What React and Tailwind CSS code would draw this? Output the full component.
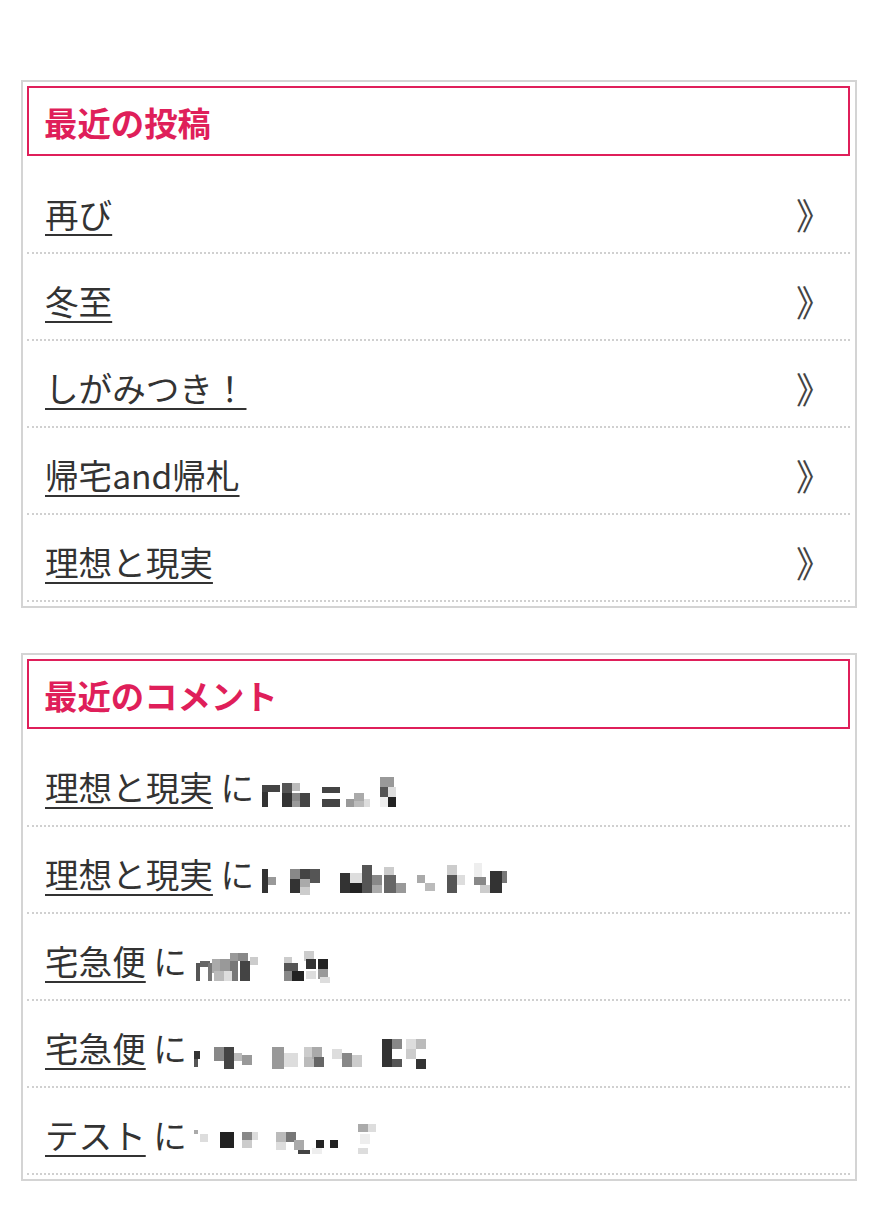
import React from "react";

const FONT = { fontFamily: '"Noto Sans CJK JP", "Noto Sans", sans-serif' };

function Mosaic({ w, h, rects }) {
  return (
    <svg width={w} height={h} viewBox={`0 0 ${w} ${h}`} className="inline-block align-middle">
      {rects.map((r, i) => (
        <rect key={i} x={r[0]} y={r[1]} width={r[2]} height={r[3]} fill={r[4]} />
      ))}
    </svg>
  );
}

const blobs = [
  {
    w: 145, h: 34,
    rects: [
      [0, 10, 6, 22, "#333"], [0, 10, 18, 7, "#444"], [20, 8, 10, 10, "#555"], [20, 18, 10, 14, "#333"],
      [30, 8, 8, 8, "#bbb"], [30, 18, 10, 8, "#888"], [38, 18, 10, 14, "#444"], [30, 26, 8, 6, "#999"],
      [60, 12, 18, 6, "#444"], [60, 24, 18, 8, "#444"],
      [84, 24, 8, 8, "#999"], [92, 18, 10, 8, "#aaa"], [92, 26, 10, 6, "#bbb"], [102, 24, 6, 8, "#ddd"],
      [118, 2, 14, 10, "#999"], [118, 12, 8, 10, "#555"], [126, 12, 8, 10, "#ddd"], [118, 22, 14, 10, "#eee"], [126, 22, 8, 10, "#222"],
    ],
  },
  {
    w: 245, h: 36,
    rects: [
      [0, 8, 6, 24, "#333"], [6, 16, 8, 8, "#999"],
      [28, 8, 10, 10, "#888"], [38, 8, 10, 10, "#444"], [28, 18, 10, 14, "#333"], [38, 18, 10, 8, "#aaa"], [48, 8, 10, 14, "#555"], [38, 26, 10, 8, "#ccc"],
      [78, 12, 10, 20, "#333"], [88, 12, 12, 10, "#ddd"], [88, 22, 12, 10, "#222"], [100, 4, 10, 28, "#555"], [110, 14, 10, 10, "#888"], [110, 24, 10, 8, "#aaa"],
      [122, 6, 10, 8, "#ccc"], [122, 14, 12, 18, "#666"], [134, 22, 10, 10, "#999"],
      [155, 14, 8, 8, "#aaa"], [163, 22, 10, 8, "#bbb"],
      [185, 4, 10, 10, "#ccc"], [185, 14, 10, 18, "#555"], [195, 14, 8, 10, "#ddd"],
      [212, 2, 8, 14, "#eee"], [212, 16, 12, 8, "#888"], [218, 24, 10, 8, "#ccc"], [228, 10, 12, 22, "#333"], [240, 10, 5, 12, "#777"],
    ],
  },
  {
    w: 140, h: 34,
    rects: [
      [2, 14, 4, 18, "#555"], [6, 12, 10, 6, "#666"], [14, 14, 4, 18, "#777"],
      [18, 10, 12, 14, "#aaa"], [26, 10, 10, 14, "#999"], [36, 4, 10, 8, "#999"], [36, 12, 8, 20, "#777"],
      [44, 4, 10, 8, "#888"], [46, 12, 10, 20, "#444"], [56, 8, 8, 8, "#ccc"], [20, 22, 10, 10, "#bbb"], [30, 22, 8, 10, "#ddd"],
      [90, 8, 8, 6, "#ccc"], [90, 14, 14, 8, "#555"], [90, 22, 8, 10, "#888"], [98, 22, 12, 10, "#222"],
      [110, 2, 10, 10, "#ccc"], [112, 10, 10, 10, "#333"], [124, 10, 10, 10, "#222"], [124, 20, 10, 10, "#999"], [112, 22, 10, 8, "#ddd"], [126, 28, 10, 6, "#ddd"],
    ],
  },
  {
    w: 245, h: 36,
    rects: [
      [0, 16, 6, 8, "#333"], [0, 24, 4, 8, "#555"],
      [20, 12, 10, 14, "#888"], [30, 12, 10, 22, "#444"], [40, 18, 8, 8, "#bbb"], [48, 20, 10, 10, "#999"],
      [78, 12, 12, 22, "#999"], [90, 18, 14, 14, "#ddd"],
      [110, 12, 8, 10, "#ccc"], [110, 22, 10, 10, "#bbb"], [118, 12, 10, 12, "#aaa"], [120, 22, 10, 10, "#666"],
      [138, 14, 10, 10, "#ddd"], [148, 18, 10, 14, "#888"], [158, 20, 10, 12, "#ccc"],
      [188, 4, 10, 28, "#333"], [198, 4, 10, 10, "#888"], [198, 24, 10, 8, "#555"],
      [212, 4, 10, 10, "#ddd"], [222, 4, 10, 10, "#bbb"], [212, 14, 10, 10, "#ccc"], [222, 24, 10, 10, "#333"],
    ],
  },
  {
    w: 190, h: 40,
    rects: [
      [0, 10, 4, 4, "#aaa"], [6, 14, 8, 8, "#ddd"],
      [26, 12, 14, 16, "#222"], [48, 12, 10, 8, "#888"], [48, 20, 10, 8, "#ccc"], [58, 12, 6, 8, "#ddd"],
      [82, 12, 10, 10, "#bbb"], [92, 12, 10, 10, "#777"], [82, 22, 10, 8, "#ddd"], [100, 20, 10, 10, "#aaa"], [104, 30, 12, 4, "#444"],
      [122, 20, 8, 8, "#222"], [136, 20, 8, 8, "#222"], [118, 28, 10, 6, "#eee"],
      [164, 4, 10, 8, "#aaa"], [174, 4, 8, 8, "#ddd"], [166, 14, 10, 10, "#eee"], [164, 28, 10, 6, "#ddd"],
    ],
  },
];

const posts = ["再び", "冬至", "しがみつき！", "帰宅and帰札", "理想と現実"];
const comments = [
  { title: "理想と現実", blob: 0 },
  { title: "理想と現実", blob: 1 },
  { title: "宅急便", blob: 2 },
  { title: "宅急便", blob: 3 },
  { title: "テスト", blob: 4 },
];

function Card({ title, children }) {
  return (
    <div className="border-2 border-[#d4d4d4] p-[4px] pr-[5px] bg-white">
      <div className="border-2 border-[#df1f5a] pl-[15px] pt-[9px] pb-[7px] leading-[50px] text-[33.4px] font-bold text-[#df1f5a]">
        {title}
      </div>
      <ul className="mt-[11px]">{children}</ul>
    </div>
  );
}

function Row({ children }) {
  return (
    <li className="flex items-center justify-between pl-[18px] pr-[18px] pt-[22px] pb-[13px] leading-[50px] border-b-2 border-dotted border-[#d0d0d0] text-[33.6px] text-[#333]">
      {children}
    </li>
  );
}

export default function App() {
  return (
    <div className="bg-white min-h-[1220px] pt-[80px] pl-[21px] pr-[12px]" style={FONT}>
      <Card title="最近の投稿">
        {posts.map((p) => (
          <Row key={p}>
            <a className="underline decoration-2 underline-offset-[6px] text-[#333]">{p}</a>
            <span className="text-[#444] text-[36px]">》</span>
          </Row>
        ))}
      </Card>
      <div className="h-[45px]" />
      <Card title="最近のコメント">
        {comments.map((c, i) => (
          <Row key={i}>
            <span className="whitespace-nowrap">
              <a className="underline decoration-2 underline-offset-[6px] text-[#333]">{c.title}</a>
              {" に "}
              <Mosaic {...blobs[c.blob]} />
            </span>
          </Row>
        ))}
      </Card>
    </div>
  );
}
